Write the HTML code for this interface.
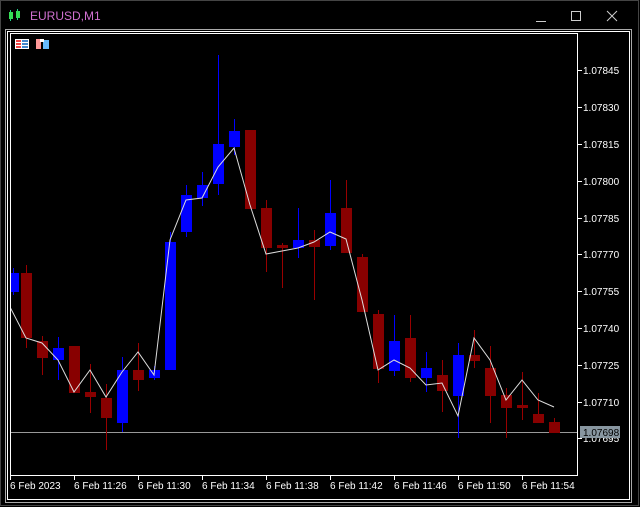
<!DOCTYPE html>
<html><head><meta charset="utf-8"><style>
body{margin:0;background:#000;width:640px;height:507px;overflow:hidden;font-family:"Liberation Sans",sans-serif}
</style></head><body>
<svg width="640" height="507" xmlns="http://www.w3.org/2000/svg" style="display:block">
<rect width="640" height="507" fill="#000"/>
<rect x="0.5" y="0.5" width="638" height="505" fill="none" stroke="#444"/>
<!-- title -->
<g>
<line x1="10.5" y1="10" x2="10.5" y2="21" stroke="#2c8" />
<rect x="9" y="12" width="4" height="7" fill="#3d5"/>
<line x1="17.5" y1="9" x2="17.5" y2="20" stroke="#2c8"/>
<rect x="16" y="11" width="4" height="7" fill="#3d5"/>
<text x="30" y="20" font-size="12" fill="#d070d0">EURUSD,M1</text>
<line x1="536" y1="21.5" x2="546" y2="21.5" stroke="#ccc"/>
<rect x="571.5" y="11.5" width="9" height="9" fill="none" stroke="#ccc"/>
<path d="M607 11L617 21M617 11L607 21" stroke="#ccc"/>
</g>
<!-- frames -->
<rect x="5.5" y="29.5" width="626" height="473" fill="none" stroke="#aaa"/>
<rect x="7.5" y="31.5" width="622" height="468" fill="none" stroke="#fff"/>
<rect x="10.5" y="33.5" width="567" height="442" fill="none" stroke="#fff"/>
<!-- top-left icons -->
<rect x="15" y="39" width="14" height="10" fill="#fff"/>
<rect x="16" y="40" width="5" height="8" fill="#e44"/>
<rect x="22" y="40" width="6" height="8" fill="#48c"/>
<line x1="16" y1="42.5" x2="28" y2="42.5" stroke="#fff"/><line x1="16" y1="45.5" x2="28" y2="45.5" stroke="#fff"/>
<rect x="36" y="39" width="5" height="10" fill="#f99"/>
<rect x="43" y="40" width="6" height="9" fill="#6bf"/>
<rect x="40" y="39" width="4" height="3" fill="#fff"/>
<clipPath id="c"><rect x="11" y="34" width="566" height="441"/></clipPath>
<g clip-path="url(#c)">
<line x1="11" y1="432.5" x2="577" y2="432.5" stroke="#999"/>
<g id="candles">
<!-- wicks -->
<g stroke-width="1">
<line x1="13.5" y1="268" x2="13.5" y2="295" stroke="#00f"/>
<line x1="26.5" y1="265" x2="26.5" y2="348" stroke="#900"/>
<line x1="42.5" y1="336" x2="42.5" y2="375" stroke="#900"/>
<line x1="58.5" y1="337" x2="58.5" y2="380" stroke="#00f"/>
<line x1="74.5" y1="346" x2="74.5" y2="393" stroke="#900"/>
<line x1="90.5" y1="364" x2="90.5" y2="413" stroke="#900"/>
<line x1="106.5" y1="384" x2="106.5" y2="450" stroke="#900"/>
<line x1="122.5" y1="357" x2="122.5" y2="432" stroke="#00f"/>
<line x1="138.5" y1="343" x2="138.5" y2="391" stroke="#900"/>
<line x1="154.5" y1="366" x2="154.5" y2="380" stroke="#00f"/>
<line x1="170.5" y1="232" x2="170.5" y2="370" stroke="#00f"/>
<line x1="186.5" y1="185" x2="186.5" y2="237" stroke="#00f"/>
<line x1="202.5" y1="172" x2="202.5" y2="206" stroke="#00f"/>
<line x1="218.5" y1="55" x2="218.5" y2="195" stroke="#00f"/>
<line x1="234.5" y1="119" x2="234.5" y2="155" stroke="#00f"/>
<line x1="250.5" y1="130" x2="250.5" y2="209" stroke="#900"/>
<line x1="266.5" y1="200" x2="266.5" y2="272" stroke="#900"/>
<line x1="282.5" y1="243" x2="282.5" y2="288" stroke="#900"/>
<line x1="298.5" y1="208" x2="298.5" y2="258" stroke="#00f"/>
<line x1="314.5" y1="230" x2="314.5" y2="300" stroke="#900"/>
<line x1="330.5" y1="180" x2="330.5" y2="250" stroke="#00f"/>
<line x1="346.5" y1="180" x2="346.5" y2="253" stroke="#900"/>
<line x1="362.5" y1="254" x2="362.5" y2="312" stroke="#900"/>
<line x1="378.5" y1="310" x2="378.5" y2="383" stroke="#900"/>
<line x1="394.5" y1="315" x2="394.5" y2="376" stroke="#00f"/>
<line x1="410.5" y1="315" x2="410.5" y2="382" stroke="#900"/>
<line x1="426.5" y1="352" x2="426.5" y2="392" stroke="#00f"/>
<line x1="442.5" y1="360" x2="442.5" y2="412" stroke="#900"/>
<line x1="458.5" y1="343" x2="458.5" y2="438" stroke="#00f"/>
<line x1="474.5" y1="330" x2="474.5" y2="368" stroke="#900"/>
<line x1="490.5" y1="346" x2="490.5" y2="423" stroke="#900"/>
<line x1="506.5" y1="388" x2="506.5" y2="438" stroke="#900"/>
<line x1="522.5" y1="372" x2="522.5" y2="420" stroke="#900"/>
<line x1="538.5" y1="393" x2="538.5" y2="423" stroke="#900"/>
<line x1="554.5" y1="418" x2="554.5" y2="433" stroke="#900"/>
</g>
<!-- bodies -->
<rect x="8" y="273" width="11" height="19" fill="#00f"/>
<rect x="21" y="273" width="11" height="65" fill="#800"/>
<rect x="37" y="341" width="11" height="17" fill="#800"/>
<rect x="53" y="348" width="11" height="12" fill="#00f"/>
<rect x="69" y="346" width="11" height="47" fill="#800"/>
<rect x="85" y="392" width="11" height="5" fill="#800"/>
<rect x="101" y="398" width="11" height="20" fill="#800"/>
<rect x="117" y="370" width="11" height="53" fill="#00f"/>
<rect x="133" y="370" width="11" height="10" fill="#800"/>
<rect x="149" y="370" width="11" height="8" fill="#00f"/>
<rect x="165" y="242" width="11" height="128" fill="#00f"/>
<rect x="181" y="195" width="11" height="37" fill="#00f"/>
<rect x="197" y="185" width="11" height="13" fill="#00f"/>
<rect x="213" y="144" width="11" height="40" fill="#00f"/>
<rect x="229" y="131" width="11" height="16" fill="#00f"/>
<rect x="245" y="130" width="11" height="79" fill="#800"/>
<rect x="261" y="208" width="11" height="40" fill="#800"/>
<rect x="277" y="245" width="11" height="3" fill="#800"/>
<rect x="293" y="240" width="11" height="8" fill="#00f"/>
<rect x="309" y="240" width="11" height="7" fill="#800"/>
<rect x="325" y="213" width="11" height="33" fill="#00f"/>
<rect x="341" y="208" width="11" height="45" fill="#800"/>
<rect x="357" y="257" width="11" height="55" fill="#800"/>
<rect x="373" y="314" width="11" height="55" fill="#800"/>
<rect x="389" y="341" width="11" height="30" fill="#00f"/>
<rect x="405" y="338" width="11" height="40" fill="#800"/>
<rect x="421" y="368" width="11" height="10" fill="#00f"/>
<rect x="437" y="375" width="11" height="16" fill="#800"/>
<rect x="453" y="355" width="11" height="41" fill="#00f"/>
<rect x="469" y="355" width="11" height="6" fill="#800"/>
<rect x="485" y="368" width="11" height="28" fill="#800"/>
<rect x="501" y="395" width="11" height="13" fill="#800"/>
<rect x="517" y="405" width="11" height="3" fill="#800"/>
<rect x="533" y="414" width="11" height="9" fill="#800"/>
<rect x="549" y="422" width="11" height="11" fill="#800"/>
</g>
<polyline fill="none" stroke="#ddd" stroke-width="1" points="10,307 26,338 42,343 58,360 74,392 90,370 106,397 122,372 138,352 154,375 170,240 186,200 202,198 218,167 234,148 250,205 266,254 282,251 298,248 314,242 330,232 346,239 362,300 378,370 394,360 410,368 426,385 442,383 458,416 474,338 490,360 506,400 522,380 538,400 554,407"/>
</g>
<!-- price axis -->
<g font-size="10" fill="#fff" stroke="none">
<g stroke="#fff">
<line x1="578" y1="70.5" x2="582" y2="70.5"/><line x1="578" y1="107.5" x2="582" y2="107.5"/><line x1="578" y1="144.5" x2="582" y2="144.5"/><line x1="578" y1="181.5" x2="582" y2="181.5"/><line x1="578" y1="218.5" x2="582" y2="218.5"/><line x1="578" y1="254.5" x2="582" y2="254.5"/><line x1="578" y1="291.5" x2="582" y2="291.5"/><line x1="578" y1="328.5" x2="582" y2="328.5"/><line x1="578" y1="365.5" x2="582" y2="365.5"/><line x1="578" y1="402.5" x2="582" y2="402.5"/><line x1="578" y1="438.5" x2="582" y2="438.5"/>
</g>
<text x="583" y="74">1.07845</text>
<text x="583" y="111">1.07830</text>
<text x="583" y="148">1.07815</text>
<text x="583" y="185">1.07800</text>
<text x="583" y="222">1.07785</text>
<text x="583" y="258">1.07770</text>
<text x="583" y="295">1.07755</text>
<text x="583" y="332">1.07740</text>
<text x="583" y="369">1.07725</text>
<text x="583" y="406">1.07710</text>
<text x="583" y="442">1.07695</text>
<rect x="580" y="426" width="40" height="12" fill="#8896a0"/>
<text x="583" y="436" fill="#000">1.07698</text>
</g>
<!-- time axis -->
<g font-size="10" fill="#fff">
<g stroke="#fff"><line x1="10.5" y1="476" x2="10.5" y2="480"/><line x1="74.5" y1="476" x2="74.5" y2="480"/><line x1="138.5" y1="476" x2="138.5" y2="480"/><line x1="202.5" y1="476" x2="202.5" y2="480"/><line x1="266.5" y1="476" x2="266.5" y2="480"/><line x1="330.5" y1="476" x2="330.5" y2="480"/><line x1="394.5" y1="476" x2="394.5" y2="480"/><line x1="458.5" y1="476" x2="458.5" y2="480"/><line x1="522.5" y1="476" x2="522.5" y2="480"/></g>
<text x="10" y="489">6 Feb 2023</text>
<text x="74" y="489">6 Feb 11:26</text>
<text x="138" y="489">6 Feb 11:30</text>
<text x="202" y="489">6 Feb 11:34</text>
<text x="266" y="489">6 Feb 11:38</text>
<text x="330" y="489">6 Feb 11:42</text>
<text x="394" y="489">6 Feb 11:46</text>
<text x="458" y="489">6 Feb 11:50</text>
<text x="522" y="489">6 Feb 11:54</text>
</g>
</svg>
</body></html>
